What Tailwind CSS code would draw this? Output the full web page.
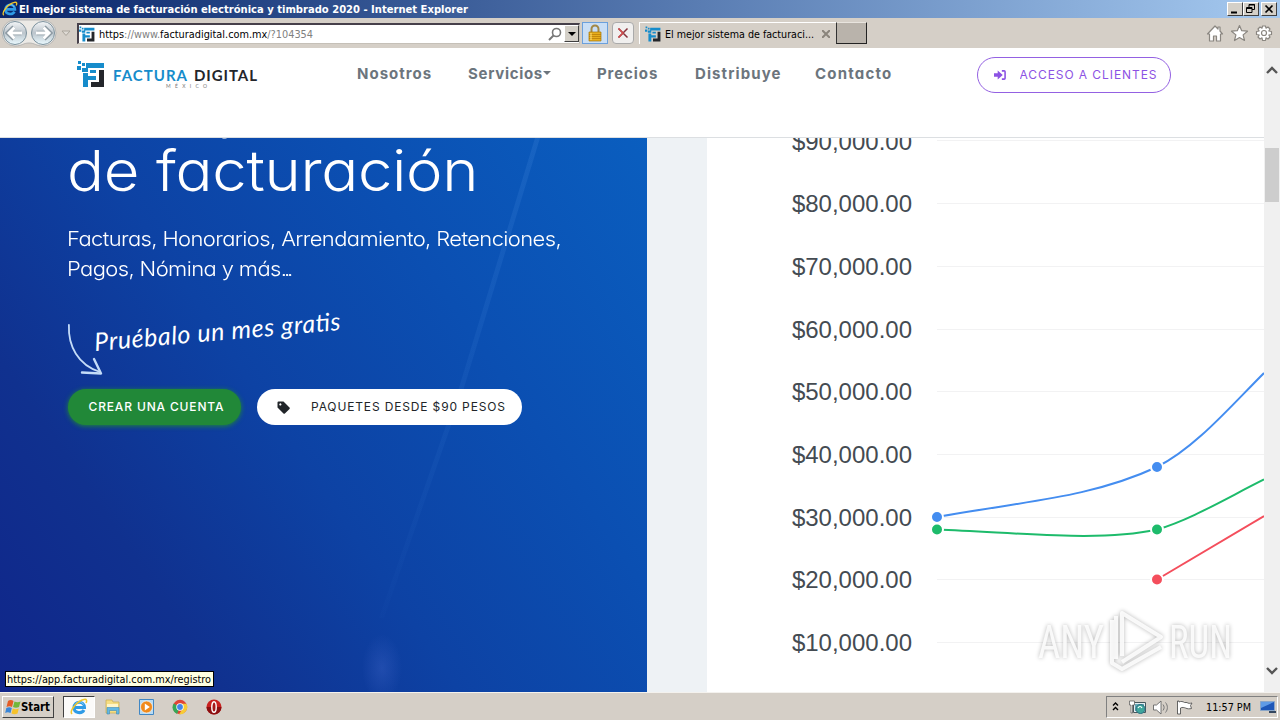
<!DOCTYPE html>
<html lang="es">
<head>
    <meta charset="UTF-8">
    <meta name="viewport" content="width=device-width, initial-scale=1.0">
    <title>El mejor sistema de facturación electrónica y timbrado 2020</title>
    <script src="https://cdn.jsdelivr.net/npm/@tailwindcss/browser@4"></script>
</head>
<body class="w-[1280px] h-[720px] overflow-hidden flex flex-col relative bg-white font-['DejaVu_Sans_Condensed','DejaVu_Sans',sans-serif] [font-stretch:condensed] text-[11px] text-black">
    <!-- Shared symbols -->
    <svg class="hidden">
        <symbol id="logo" viewBox="0 0 28 28">
            <path fill="#168ccb" d="M1 1h3v3H1zM5 3h3v3H5zM0 6h4v4H0zM9 3h18v5H9zM5 8h6v4H5zM6 13h5v3h8v4h-8v7H6zM13 10h6v3h-6z"/>
            <path fill="#24262b" d="M22 10h5v17H14v-5h8z"/>
        </symbol>
        <symbol id="ie" viewBox="0 0 18 18">
            <path fill="none" stroke="#2f9be6" stroke-width="3" d="M4 9.500h10.500C14.500 2.500 4 2.500 4 9.500c0 6 8 6.500 10 2.500"/>
            <path fill="none" stroke="#9adcff" stroke-width=".8" d="M5 7c1.500-4 7-4 8.500-.5"/>
            <path fill="none" stroke="#f0c62c" stroke-width="1.500" d="M2 16C-1 13 7 3 14 1.500c3-.7 3 1.500 2 3.500"/>
        </symbol>
    </svg>

    <!-- Title bar -->
    <div class="h-[18px] shrink-0 flex items-center pl-[2px] pr-[3px] bg-linear-to-r from-[#0a246a] to-[#a6caf0] text-white">
        <svg class="w-4 h-4 mr-px"><use href="#ie"/></svg>
        <svg class="w-[452px] h-[18px]"><text x="0" y="13" textLength="449" lengthAdjust="spacingAndGlyphs" class="fill-white font-bold text-[11px]">El mejor sistema de facturación electrónica y timbrado 2020 - Internet Explorer</text></svg>
        <div class="ml-auto flex">
            <div class="w-4 h-[14px] bg-[#d4d0c8] border border-t-white border-l-white border-b-[#404040] border-r-[#404040]">
                <svg viewBox="0 0 14 12"><path stroke="#000" stroke-width="2" d="M3 9.500h6"/></svg>
            </div>
            <div class="w-4 h-[14px] bg-[#d4d0c8] border border-t-white border-l-white border-b-[#404040] border-r-[#404040]">
                <svg viewBox="0 0 14 12"><path fill="none" stroke="#000" d="M5 4V1.500h5.500v5H8M5 2h6M2.500 4.500H8v5H2.500zM2 5.500h6"/></svg>
            </div>
            <div class="w-4 h-[14px] ml-[2px] bg-[#d4d0c8] border border-t-white border-l-white border-b-[#404040] border-r-[#404040]">
                <svg viewBox="0 0 14 12"><path stroke="#000" stroke-width="1.700" d="M3.500 2.500l7 7m0-7l-7 7"/></svg>
            </div>
        </div>
    </div>

    <!-- Address bar and tabs -->
    <div class="h-[30px] shrink-0 flex items-center bg-[#d5cfc7]">
        <svg class="w-[77px] h-[30px]" viewBox="0 0 77 30">
            <defs>
                <linearGradient id="ball" x2="0" y2="1">
                    <stop stop-color="#f4f6f8"/><stop offset=".5" stop-color="#bcc5cc"/><stop offset="1" stop-color="#eafaff"/>
                </linearGradient>
            </defs>
            <path fill="#eceae6" stroke="#a5a5a5" stroke-width=".7" d="M15 2h28a13 13 0 0 1 0 26c-7 0-8-3-14-3s-7 3-14 3a13 13 0 0 1 0-26z"/>
            <circle cx="15" cy="15" r="11.500" fill="url(#ball)" stroke="#7d929e"/>
            <circle cx="43" cy="15" r="11.500" fill="url(#ball)" stroke="#7d929e"/>
            <path fill="none" stroke="#8d9aa3" stroke-width="4.500" d="M8.500 15h13M14 9l-6 6 6 6"/>
            <path fill="none" stroke="#fff" stroke-width="3" d="M9 15h13M14.500 9.500L9 15l5.500 5.500"/>
            <path fill="none" stroke="#8d9aa3" stroke-width="4.500" d="M49.500 15h-13M44 9l6 6-6 6"/>
            <path fill="none" stroke="#fff" stroke-width="3" d="M49 15H36M43.500 9.500L49 15l-5.500 5.500"/>
            <path fill="#dedad4" stroke="#aaa59c" d="M62 13h8l-4 4.500z"/>
        </svg>
        <div class="w-[503px] h-[21px] flex items-center bg-white border border-t-2 border-l-2 border-t-[#46404a] border-l-[#46404a] border-b-[#c5c0b8] border-r-[#c5c0b8]">
            <svg class="w-4 h-4 mr-1"><use href="#logo"/></svg>
            <svg class="w-[216px] h-[18px]"><text x="0" y="13" textLength="214" lengthAdjust="spacingAndGlyphs" class="text-[11px]">https<tspan fill="#808080">://www.</tspan>facturadigital.com.mx<tspan fill="#808080">/?104354</tspan></text></svg>
            <svg class="w-[14px] h-[14px] ml-auto mr-[2px]" viewBox="0 0 14 14"><circle cx="8.500" cy="5.500" r="4" fill="none" stroke="#777" stroke-width="1.600"/><path stroke="#777" stroke-width="2" d="M5.500 8.500L1 13"/></svg>
            <div class="w-[15px] h-[17px] flex items-center justify-center bg-[#d4d0c8] border border-t-white border-l-white border-b-[#404040] border-r-[#404040]">
                <svg class="w-2 h-1" viewBox="0 0 8 4"><path d="M0 0h8L4 4z"/></svg>
            </div>
        </div>
        <div class="w-[26px] h-[22px] ml-[2px] flex items-center justify-center bg-[#c9def5] border border-[#6ba0dc]">
            <svg class="w-4 h-[18px]" viewBox="0 0 16 18"><path fill="none" stroke="#a38845" stroke-width="2" d="M4.500 9V5a3.500 3.500 0 0 1 7 0v4"/><path fill="#e8ae1d" stroke="#a57609" stroke-width=".7" d="M2 8h12v9H2z"/><path stroke="#b77e07" stroke-width=".8" d="M2 10.500h12M2 12.500h12M2 14.500h12"/><path stroke="#ffe27a" d="M4 9v7"/></svg>
        </div>
        <div class="w-[22px] h-[22px] ml-1 flex items-center justify-center bg-[#f0efee] border border-[#aaa] rounded-sm">
            <svg class="w-3 h-3" viewBox="0 0 12 12" fill="none"><path stroke="#87323c" stroke-width="1.500" d="M1.500 1.500l9 9m0-9l-9 9"/><path stroke="#d04c4c" stroke-width="1.500" d="M1.500 1.500L6 6 1.500 10.500"/></svg>
        </div>
        <div class="w-[198px] h-[22px] ml-[5px] pl-[5px] flex items-center border-t border-l border-white">
            <svg class="w-4 h-4 shrink-0"><use href="#logo"/></svg>
            <svg class="w-[154px] h-[18px] ml-[4px] shrink-0"><text x="0" y="13" textLength="149" lengthAdjust="spacingAndGlyphs" class="text-[11px]">El mejor sistema de facturaci...</text></svg>
            <svg class="w-2 h-2 ml-[3px] shrink-0" viewBox="0 0 8 8"><path stroke="#8b857c" stroke-width="2" d="M0 0l8 8m0-8L0 8"/></svg>
        </div>
        <div class="w-[31px] h-[22px] -ml-px bg-[#b9b3ab] border border-l-[#333] border-t-[#e8e4de] border-b-[#222] border-r-[#222]"></div>
        <svg class="w-[68px] h-5 ml-auto mr-[6px]" viewBox="0 0 68 20" fill="#fff" stroke="#8a8680" stroke-width="1.200" stroke-linejoin="round">
            <path d="M1.500 11L9 3l3 3V4h2v4l2.500 3h-2v7h-4v-5h-3v5h-4v-7z"/>
            <path d="M33.500 2.500l2.200 5.200 5.800.5-4.400 3.700 1.400 5.600-5-3-5 3 1.400-5.600-4.400-3.700 5.800-.5z"/>
            <path d="M56.500 3h3l.5 2.200 2-1.200 2 2-1.200 2 2.700.5v3l-2.700.5 1.200 2-2 2-2-1.200-.5 2.700h-3l-.5-2.700-2 1.200-2-2 1.200-2-2.700-.5v-3l2.700-.5-1.200-2 2-2 2 1.200z"/>
            <circle cx="58" cy="10" r="2.500"/>
        </svg>
    </div>

    <!-- Viewport -->
    <div class="h-[644px] shrink-0 flex">
        <div class="w-[1264px] flex flex-col font-['Inter',sans-serif] [font-stretch:normal] [font-feature-settings:'cv11']">
            <!-- Site header -->
            <header class="h-[90px] shrink-0 flex items-start bg-white border-b border-[#dcdfe2] text-[15px] font-bold text-[#6c757d]">
                <svg class="w-[184px] h-[32px] ml-[77px] mt-3" viewBox="0 0 184 32">
                    <use href="#logo" width="28" height="28"/>
                    <text x="36" y="21" textLength="74" class="font-['Lato'] text-[15px]" font-weight="700" fill="#168ccb">FACTURA</text>
                    <text x="117" y="21" textLength="63" class="font-['Lato'] text-[15px]" font-weight="700" fill="#24262b">DIGITAL</text>
                    <text x="89" y="28" textLength="41" class="font-['Lato'] text-[5px]" font-weight="400" fill="#777">MÉXICO</text>
                </svg>
                <nav class="ml-[96px] mt-[15px] flex leading-[22px]">
                    <a class="w-[111px] tracking-[1px]">Nosotros</a>
                    <a class="w-[129px] tracking-[0.7px] flex items-center">Servicios<svg class="w-2 h-1 -mt-[3px]" viewBox="0 0 8 4"><path fill="#6c757d" d="M0 0h8L4 4z"/></svg></a>
                    <a class="w-[98px] tracking-[0.9px]">Precios</a>
                    <a class="w-[120px] tracking-[1.1px]">Distribuye</a>
                    <a class="w-[162px] tracking-[1.2px]">Contacto</a>
                </nav>
                <a class="w-[194px] h-9 mt-[9px] pl-4 flex items-center rounded-full border border-[#9461e2] text-[#8c52e4] text-xs font-normal">
                    <svg class="w-3 h-3 mr-[14px]" viewBox="0 0 13 12"><path fill="#8c52e4" d="M0 4.200h4V1l5.500 5L4 11V7.800H0z"/><path fill="none" stroke="#8c52e4" stroke-width="1.700" d="M8.500 1.500H11a1 1 0 0 1 1 1v7a1 1 0 0 1-1 1H8.500"/></svg>
                    <svg class="w-[140px] h-5"><text x="-.5" y="13.500" textLength="137" fill="#8c52e4">ACCESO A CLIENTES</text></svg>
                </a>
            </header>

            <main class="h-[554px] flex">
                <!-- Hero -->
                <section class="w-[647px] overflow-hidden pl-[68px] relative text-white bg-[linear-gradient(56deg,#10268a_0%,#10318f_22%,#0d42a4_45%,#0b4fb2_70%,#0a5ebf_100%)]">
                    <svg class="absolute inset-0 w-[647px] h-[554px]">
                        <defs>
                            <linearGradient id="ray" x2="0" y2="1"><stop stop-color="#4b8ee0" stop-opacity=".2"/><stop offset="1" stop-color="#4b8ee0" stop-opacity=".02"/></linearGradient>
                            <radialGradient id="glow"><stop stop-color="#5878dc" stop-opacity=".25"/><stop offset="1" stop-color="#5878dc" stop-opacity="0"/></radialGradient>
                        </defs>
                        <path fill="url(#ray)" d="M535 0h5L463 253 384 480h-5L458 253z"/>
                        <ellipse cx="382" cy="530" rx="20" ry="34" fill="url(#glow)"/>
                    </svg>
                    <div class="relative">
                        <h1 class="-mt-[67px] text-[56px] leading-[67px] font-light tracking-[-0.3px] origin-left scale-x-[1.1] -ml-px"><span class="relative top-[3px]">El mejor sistema</span><br>de facturación</h1>
                        <p class="mt-[19px] text-xl leading-[30px] font-light tracking-[-0.55px] origin-left scale-x-[1.098] -ml-px">Facturas, Honorarios, Arrendamiento, Retenciones,<br>Pagos, Nómina y más<span class="tracking-[-2.8px]">...</span></p>
                        <svg class="w-[290px] h-[75px] mt-[26px] mb-1 overflow-visible" viewBox="0 0 290 75">
                            <path fill="none" stroke="#c4dcf8" stroke-width="1.800" stroke-linecap="round" d="M.9 15C0 36 10 55 32 62"/>
                            <path fill="none" stroke="#c4dcf8" stroke-width="2.400" stroke-linejoin="round" stroke-linecap="round" d="M26 49l7 14.500-19-1"/>
                            <text x="27" y="41" transform="rotate(-4.900 27 41)" textLength="247" lengthAdjust="spacing" class="font-['Lato'] italic text-[25px]" fill="#fff">Pruébalo un mes gratis</text>
                        </svg>
                        <div class="flex gap-4 text-xs">
                            <a class="w-[173px] h-9 flex items-center justify-center rounded-full bg-[#218838] shadow-[0_1px_5px_#218838] font-medium">
                                <svg class="w-[137px] h-5 ml-1"><text x=".5" y="14" textLength="135" fill="#fff">CREAR UNA CUENTA</text></svg>
                            </a>
                            <a class="w-[265px] h-9 pl-5 flex items-center rounded-full bg-white">
                                <svg class="w-[13px] h-[13px] mr-[21px]" viewBox="0 0 13 13"><path fill="#212529" fill-rule="evenodd" d="M.5 1.500a1 1 0 0 1 1-1h5l6 6a1 1 0 0 1 0 1.400l-4.600 4.600a1 1 0 0 1-1.400 0l-6-6zM3.300 2.300a1.100 1.100 0 1 0 .1 0z"/></svg>
                                <svg class="w-[197px] h-5"><text x="0" y="14" textLength="194" fill="#212529">PAQUETES DESDE $90 PESOS</text></svg>
                            </a>
                        </div>
                    </div>
                </section>

                <!-- Chart -->
                <section class="w-[617px] pl-[60px] bg-[#eef2f5]">
                    <svg class="w-[557px] h-[554px] bg-white font-['Liberation_Sans'] text-2xl" viewBox="707 138 557 554">
                        <path stroke="#f2f2f3" stroke-width="1" d="M937 140.500h327M937 203.500h327M937 266.500h327M937 329.500h327M937 391.500h327M937 454.500h327M937 517.500h327M937 579.500h327M937 642.500h327"/>
                        <g fill="#444b52" text-anchor="end">
                            <text x="912" y="150">$90,000.00</text>
                            <text x="912" y="212">$80,000.00</text>
                            <text x="912" y="275">$70,000.00</text>
                            <text x="912" y="338">$60,000.00</text>
                            <text x="912" y="400">$50,000.00</text>
                            <text x="912" y="463">$40,000.00</text>
                            <text x="912" y="526">$30,000.00</text>
                            <text x="912" y="588">$20,000.00</text>
                            <text x="912" y="651">$10,000.00</text>
                        </g>
                        <g fill="none" stroke-width="2">
                            <path stroke="#448df0" d="M937 517C1025 501 1090 498 1157 467C1195 448 1230 407 1264 373"/>
                            <path stroke="#1dbb6b" d="M937 529.500C1025 533 1100 542 1157 529.500C1190 520 1225 499 1264 479.500"/>
                            <path stroke="#f44e5c" d="M1157 579.500L1264 516"/>
                        </g>
                        <g stroke="#fff" stroke-width="2">
                            <circle cx="937" cy="517" r="6" fill="#448df0"/>
                            <circle cx="1157" cy="467" r="6" fill="#448df0"/>
                            <circle cx="937" cy="529.500" r="6" fill="#1dbb6b"/>
                            <circle cx="1157" cy="529.500" r="6" fill="#1dbb6b"/>
                            <circle cx="1157" cy="579.500" r="6" fill="#f44e5c"/>
                        </g>
                    </svg>
                </section>
            </main>
        </div>

        <!-- Scrollbar -->
        <div class="w-4 flex flex-col items-center bg-[#f0f0f0]">
            <svg class="w-4 h-[100px] shrink-0" viewBox="0 0 16 100"><path fill="none" stroke="#555" stroke-width="2.400" d="M3 25l5-5 5 5"/></svg>
            <div class="w-[14px] h-[54px] shrink-0 bg-[#cdcdcd]"></div>
            <svg class="w-4 h-8 mt-auto" viewBox="0 0 16 32"><path fill="none" stroke="#555" stroke-width="2.400" d="M3 8l5 5 5-5"/></svg>
        </div>
    </div>

    <!-- Link status -->
    <div class="absolute left-[5px] top-[671px] w-[209px] h-4 bg-[#ffffe1] border border-black">
        <svg class="w-[207px] h-[14px]"><text x="1" y="11" textLength="204" lengthAdjust="spacingAndGlyphs" class="text-[11px]">https://app.facturadigital.com.mx/registro</text></svg>
    </div>

    <!-- Watermark -->
    <svg class="absolute left-[1030px] top-[600px] w-[210px] h-[80px] drop-shadow-[0_0_2px_#00000055]" viewBox="0 0 210 80">
        <g fill="#fff" fill-opacity=".85" class="font-['Roboto'] text-[47px]">
            <text x="8" y="58" textLength="66" lengthAdjust="spacingAndGlyphs">ANY</text>
            <text x="139" y="58" textLength="63" lengthAdjust="spacingAndGlyphs">RUN</text>
        </g>
        <path fill="none" stroke="#fff" stroke-opacity=".85" stroke-width="4" stroke-linejoin="round" d="M82 20v43l10 6 39-22M92 56V13l39 24-39 25M86 16v43"/>
    </svg>

    <!-- Taskbar -->
    <div class="h-7 shrink-0 flex items-center bg-[#d5cfc7] border-t border-[#f4f2ee]">
        <div class="w-[52px] h-[22px] ml-[2px] mt-px pl-[2px] flex items-center bg-[#d5cfc7] border border-t-white border-l-white border-b-[#404040] border-r-[#404040]">
            <svg class="w-4 h-4" viewBox="0 0 16 16"><path fill="#e45c25" d="M3 2c2-1.500 4-1 5.500 0L7 8C5.500 7 3.500 7 1.500 8z"/><path fill="#72b73a" d="M9.500 2.500c2 1 4 1 6 0L14 8c-2 1-4 1-6 0z"/><path fill="#3a86d8" d="M1.300 9c2-1 4-1 5.500 0l-1.300 5c-2-1-3.500-1-5.300 0z"/><path fill="#f6c22b" d="M7.800 9.500c2 1 4 1 6 0l-1.300 5c-2 1-4 1-6 0z"/></svg>
            <svg class="w-[30px] h-4"><text x="0" y="12" textLength="29" lengthAdjust="spacingAndGlyphs" class="font-bold text-xs">Start</text></svg>
        </div>
        <div class="w-8 h-[22px] ml-[9px] mt-px flex items-center justify-center bg-[#fbfaf9] border border-t-[#404040] border-l-[#404040] border-b-white border-r-white">
            <svg class="w-[18px] h-[18px]"><use href="#ie"/></svg>
        </div>
        <svg class="w-[18px] h-[18px] ml-[9px]" viewBox="0 0 18 18"><path fill="#f5dd83" stroke="#c9aa4d" stroke-width=".7" d="M2 2h6l1 2h6v11H2z"/><path fill="#fff5c8" d="M3 6h11v5H3z"/><path fill="#62b8e4" stroke="#4189b4" stroke-width=".6" d="M3 9.500h12V16h-2.500v-3.500h-7V16H3z"/></svg>
        <svg class="w-[18px] h-[18px] ml-[16px]" viewBox="0 0 18 18"><path fill="#b9dcf4" stroke="#4187c4" d="M1.500 1.500h14v15h-14z"/><circle cx="8.500" cy="9" r="6" fill="#f08a1c" stroke="#fff" stroke-width=".6"/><path fill="#fff" d="M6.800 5.500l5 3.500-5 3.500z"/></svg>
        <svg class="w-4 h-4 ml-[16px]" viewBox="0 0 16 16"><circle cx="8" cy="8" r="7.200" fill="#e04436"/><path fill="#37a757" d="M8 8l-3 7A7.200 7.200 0 0 1 1.700 4.500z"/><path fill="#f7cb35" d="M8 4.800h6.500A7.200 7.200 0 0 1 7 15.200l4-6z"/><circle cx="8" cy="8" r="3.700" fill="#fff"/><circle cx="8" cy="8" r="2.900" fill="#4385e8"/></svg>
        <svg class="w-4 h-4 ml-[18px]" viewBox="0 0 16 16"><circle cx="8" cy="8" r="7.500" fill="#c9201f"/><path fill="#8b0f10" d="M8 15.500A7.500 7.500 0 0 0 15.500 8H.5A7.500 7.500 0 0 0 8 15.500z"/><ellipse cx="8" cy="8" rx="2.200" ry="5.300" fill="#a51718" stroke="#fff" stroke-width="1.400"/></svg>
        <div class="w-[172px] h-[22px] ml-auto mr-[2px] mt-px flex items-center border border-t-[#808080] border-l-[#808080] border-b-white border-r-white">
            <svg class="w-[90px] h-5 ml-[4px]" viewBox="0 0 90 20">
                <path fill="none" stroke="#000" stroke-width="1.400" d="M2 8.500L4.500 6 7 8.500M2 13l2.500-2.500L7 13"/>
                <path fill="#e6eef0" stroke="#46585d" d="M22.500 5.500h12v10h-12z"/><path fill="#68a8b8" d="M24 7h9v7h-9z"/><circle cx="29.500" cy="12" r="4.500" fill="#3fa69b" stroke="#2b6e83"/><path fill="none" stroke="#fff" stroke-width="1.200" d="M27 11c1-2 3-2 4 0"/><path fill="#fff" stroke="#555" stroke-width=".7" d="M18.500 4h5v4h-2v8h-1.500V8h-1.500z"/>
                <path fill="#fff" stroke="#666" stroke-width=".9" d="M42.500 8h3l4.500-4v13l-4.500-4h-3z"/><path fill="none" stroke="#777" d="M52 7.500c1.500 2 1.500 4 0 6M54.500 5.500c2.500 3 2.500 7 0 10"/>
                <path fill="#fff" stroke="#555" stroke-width=".9" d="M66.500 17V4h1.500v1c2-1 4-.5 5.500.5h2.500c1 1 3 1 5 .5l-1.500 2.500 1 3c-2 .5-4 .5-6-.5-1.500-.5-3-1-5 0v6z"/>
            </svg>
            <svg class="w-[46px] h-4 ml-[5px]"><text x="0" y="12" textLength="45" lengthAdjust="spacingAndGlyphs" class="text-[11px]">11:57 PM</text></svg>
            <svg class="w-4 h-[14px] ml-[8px]" viewBox="0 0 16 14"><path fill="#1e57b8" stroke="#8aa6c8" d="M.5 1.500h14v9H.5z"/><path fill="#5f9be6" d="M1 2h13L1 8z"/><path fill="#34475f" d="M9 11h7v2H9z"/></svg>
        </div>
    </div>
</body>
</html>
